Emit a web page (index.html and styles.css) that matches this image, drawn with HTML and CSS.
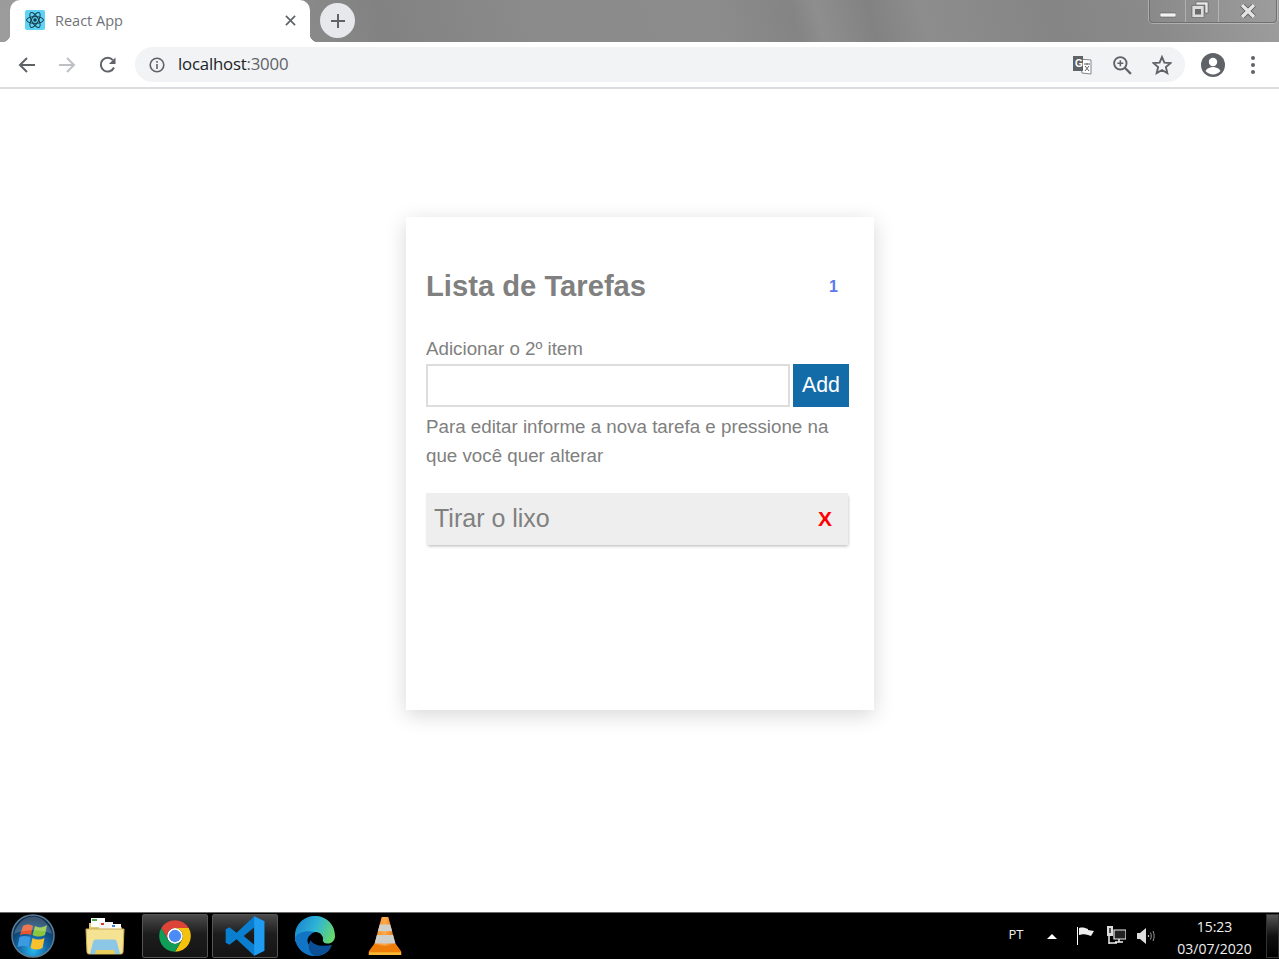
FILE: index.html
```html
<!DOCTYPE html>
<html>
<head>
<meta charset="utf-8">
<title>React App</title>
<link rel="stylesheet" href="styles.css">
</head>
<body>

<!-- browser tabs -->
<div class="tabstrip">
  <div class="tab">
    <svg class="favicon" viewBox="0 0 20 20">
      <rect width="20" height="20" rx="2" fill="#5ed3f3"/>
      <g fill="none" stroke="#143a4a" stroke-width="1">
        <ellipse cx="10" cy="10" rx="8.5" ry="3.4"/>
        <ellipse cx="10" cy="10" rx="8.5" ry="3.4" transform="rotate(60 10 10)"/>
        <ellipse cx="10" cy="10" rx="8.5" ry="3.4" transform="rotate(120 10 10)"/>
      </g>
      <circle cx="10" cy="10" r="1.8" fill="#143a4a"/>
    </svg>
    <span class="tab-title">React App</span>
    <svg class="tab-close" viewBox="0 0 12 12"><path d="M1 1l10 10M11 1L1 11" stroke="#5f6368" stroke-width="1.8"/></svg>
  </div>
  <div class="newtab">
    <svg viewBox="0 0 16 16"><path d="M8 1v14M1 8h14" stroke="#5f6368" stroke-width="2"/></svg>
  </div>
  <div class="winbtns">
    <div class="winbtn win-min"><svg viewBox="0 0 16 6"><rect y="1" width="16" height="4" rx="1" fill="#f2f2f2" stroke="#555" stroke-width=".6"/></svg></div>
    <div class="winbtn win-max"><svg viewBox="0 0 18 17"><path d="M5 1h12v11h-3V4H5z" fill="#e8e8e8" stroke="#444" stroke-width=".5"/><path d="M1 4.500h12v12H1z" fill="#dcdcdc" stroke="#444" stroke-width=".5"/><rect x="4" y="8" width="6" height="5.500" fill="#6a6a6a"/></svg></div>
    <div class="winbtn win-close"><svg viewBox="0 0 16 14"><path d="M2 1l12 12M14 1L2 13" stroke="#555" stroke-width="5"/><path d="M2 1l12 12M14 1L2 13" stroke="#e4e4e4" stroke-width="3.500"/></svg></div>
  </div>
</div>

<!-- address bar -->
<div class="toolbar">
  <svg class="navicon" viewBox="0 0 18 18"><path d="M17 9H2.500M9 2L2 9l7 7" fill="none" stroke="#5f6368" stroke-width="2"/></svg>
  <svg class="navicon" viewBox="0 0 18 18"><path d="M1 9h14.500M9 2l7 7-7 7" fill="none" stroke="#bdc1c6" stroke-width="2"/></svg>
  <svg class="navicon" viewBox="0 0 18 18"><path d="M15 11.500A6.900 6.900 0 1 1 13.900 4.100" fill="none" stroke="#5f6368" stroke-width="2"/><path d="M16.500 1.500v6.600h-6.600z" fill="#5f6368"/></svg>
  <div class="omnibox">
    <svg class="info" viewBox="0 0 16 16"><circle cx="8" cy="8" r="6.800" fill="none" stroke="#5f6368" stroke-width="1.600"/><path d="M7.200 7h1.600v5H7.200zM7.200 4h1.600v1.700H7.200z" fill="#5f6368"/></svg>
    <span class="url">localhost<span class="url-port">:3000</span></span>
    <div class="omni-icons">
      <svg class="omni-icon" viewBox="0 0 20 20"><path d="M8 4l11 1v14l-9-1z" fill="#fff" stroke="#80868b"/><path d="M1 1h10v15H1z" fill="#5f6368"/><text x="3" y="12" class="gt">G</text><path d="M12 9h6M15 8v2M13 16l4-5M13 11l4 5" stroke="#5f6368" stroke-width="1"/></svg>
      <svg class="omni-icon" viewBox="0 0 18 18"><circle cx="7.500" cy="7.500" r="5.600" fill="none" stroke="#5f6368" stroke-width="1.700"/><path d="M11.500 11.500l5.500 5.500" stroke="#5f6368" stroke-width="2"/><path d="M7.500 4.800v5.400M4.800 7.500h5.400" stroke="#5f6368" stroke-width="1.400"/></svg>
      <svg class="omni-icon" viewBox="0 0 20 20"><path d="M10 2l2.400 5.600 6.100.5-4.600 4 1.400 6L10 15l-5.300 3.100 1.400-6-4.600-4 6.100-.5z" fill="none" stroke="#5f6368" stroke-width="1.900"/></svg>
    </div>
  </div>
  <svg class="avatar" viewBox="0 0 24 24"><circle cx="12" cy="12" r="12" fill="#5f6368"/><circle cx="12" cy="9" r="4.200" fill="#fff"/><path d="M4.500 18c1.500-3 5-4 7.500-4s6 1 7.500 4c-4 4.500-11 4.500-15 0z" fill="#fff"/></svg>
  <div class="menu-dots"><i></i><i></i><i></i></div>
</div>

<!-- page -->
<div class="page">
  <div class="card">
    <div class="card-head">
      <h1>Lista de Tarefas</h1>
      <span class="count">1</span>
    </div>
    <label class="add-label" for="novo">Adicionar o 2º item</label>
    <div class="add-row">
      <input id="novo" class="add-input" type="text">
      <button class="add-btn">Add</button>
    </div>
    <p class="hint">Para editar informe a nova tarefa e pressione na que você quer alterar</p>
    <div class="item">
      <span>Tirar o lixo</span>
      <span class="item-del">X</span>
    </div>
  </div>
</div>

<!-- windows taskbar -->
<div class="taskbar">
  <div class="start">
    <svg viewBox="0 0 44 44" width="44" height="44">
      <defs>
        <radialGradient id="orb" cx="50%" cy="85%" r="75%"><stop offset="0" stop-color="#29b6ee"/><stop offset=".45" stop-color="#1468a8"/><stop offset="1" stop-color="#0a2c50"/></radialGradient>
      </defs>
      <circle cx="22" cy="22" r="21" fill="url(#orb)" stroke="#5d7c92" stroke-width="1.500"/>
      <path d="M12 12c3-2 7-2 10 0l-2 9c-3-1.500-7-1.500-11 0z" fill="#e8562a"/>
      <path d="M24 12c3 2 8 2 12-1l-2 10c-4 2-8 2-12.500 0z" fill="#8cc63e"/>
      <path d="M8.500 23c3-1.500 7-1.500 11 0l-2 10c-3-1.500-7-1.500-11 0z" fill="#3b9ae0"/>
      <path d="M21.500 24c4 2 8 2 12 0l-2 10c-4 2-8 2-12 0z" fill="#f8c12d"/>
      <path d="M3 20C6 8 15 2.500 22 2.500S38 8 41 20c-10-5-28-5-38 0z" fill="#fff" opacity=".2"/>
    </svg>
  </div>
  <div class="task">
    <svg viewBox="0 0 40 40" width="40" height="40">
      <path d="M4 7h14l2 2h15l2 3v8H4z" fill="#e2c870"/>
      <rect x="6" y="2" width="14" height="9" fill="#fff"/><rect x="7" y="3" width="5" height="2" fill="#4aa84a"/>
      <rect x="14" y="6" width="14" height="8" fill="#f4f4f4"/><rect x="16" y="7" width="3" height="2" fill="#d2402c"/>
      <rect x="25" y="8" width="11" height="7" fill="#fff"/><rect x="27" y="9" width="3" height="2" fill="#3c82d0"/>
      <path d="M1 13h38l-1 23a2 2 0 0 1-2 2H4a2 2 0 0 1-2-2z" fill="#f6e293" stroke="#c9ad58"/>
      <path d="M5 38l3-12c.5-2 2-2.500 4-2.500h16c2 0 3.500.5 4 2.500l3 12z" fill="#8cc8e6"/>
      <path d="M10 38l1-4h18l1 4z" fill="#e8cc5c"/>
    </svg>
  </div>
  <div class="task task-open">
    <svg viewBox="0 0 48 48" width="38" height="38">
      <circle cx="24" cy="24" r="10" fill="#fff"/>
      <path d="M6.680 14A20 20 0 0 1 41.320 14H24A10 10 0 0 0 15.340 29z" fill="#db4437"/>
      <path d="M41.320 14A20 20 0 0 1 24 44L32.660 29A10 10 0 0 0 24 14z" fill="#f4c20d"/>
      <path d="M24 44A20 20 0 0 1 6.680 14L15.340 29A10 10 0 0 0 32.660 29z" fill="#0f9d58"/>
      <circle cx="24" cy="24" r="7.800" fill="#4b8bf5"/>
    </svg>
  </div>
  <div class="task task-open">
    <svg viewBox="0 0 100 100" width="42" height="42">
      <path d="M72 3L96 15V85L72 97L30 58L13 71L4 66V34L13 29L30 42zM72 29L47 50L72 71z" fill="#0a7fd0"/>
      <path d="M72 3L96 15V85L72 97z" fill="#1f9cf0"/>
    </svg>
  </div>
  <div class="task">
    <svg viewBox="0 0 40 40" width="40" height="40">
      <defs>
        <linearGradient id="edge" x1="0" y1=".3" x2="1" y2=".6"><stop offset="0" stop-color="#1a86d0"/><stop offset=".5" stop-color="#2fb4d6"/><stop offset="1" stop-color="#66d96a"/></linearGradient>
      </defs>
      <path d="M0 20C0 8 9 0 20 0C31 0 40 8 40 20C40 25 36 28 32 27.500C27 27 28 24 28 22C27 18 24 16 20 16C10 16 4 21 0 26z" fill="url(#edge)"/>
      <path d="M0 20C0 32 9 40 20 40C27 40 33 37 36 31C30 35 22 36 16 31C10 26 12 19 20 16C12 14 2 16 0 22z" fill="#1274c4"/>
      <path d="M15.500 24C18 29 26 31 37 29C34 36 27 40 20 40C14 38 12 30 15.500 24z" fill="#0b4f96"/>
    </svg>
  </div>
  <div class="task">
    <svg viewBox="0 0 34 40" width="34" height="38">
      <defs>
        <linearGradient id="cone" x1="0" x2="1" y1="0" y2="0"><stop offset="0" stop-color="#f28a1a"/><stop offset=".5" stop-color="#ffa94a"/><stop offset="1" stop-color="#e06a08"/></linearGradient>
      </defs>
      <path d="M13.500 0h7L29 32H5z" fill="url(#cone)"/>
      <path d="M11.500 8h11l2 7h-15zM8.500 19h17l2.500 9H6z" fill="#cfcfcb"/>
      <path d="M6 28c6 3 16 3 22 0l6 8v4H0v-4z" fill="#ef7d0a"/>
      <path d="M0 37h34v3H0z" fill="#f7b733"/>
    </svg>
  </div>
  <div class="tray">
    <span class="tray-lang">PT</span>
    <svg class="tray-up" viewBox="0 0 10 6"><path d="M0 6l5-5 5 5z" fill="#fff"/></svg>
    <svg class="tray-icon" viewBox="0 0 20 22"><path d="M1.500 2v18" stroke="#fff"/><path d="M3 3c4-1 6 0 9 1v1l6 1-3 5-3-1c-3-1-5-1-9 0z" fill="#eee"/></svg>
    <svg class="tray-icon" viewBox="0 0 20 22"><rect x="1" y="1" width="6" height="10" fill="#ddd"/><rect x="3" y="3" width="2" height="5" fill="#555"/><path d="M3 11v8" stroke="#eee" stroke-width="1.500"/><path d="M8 5h12v9H8z" fill="#222" stroke="#eee" stroke-width="1.200"/><path d="M9 17h8M13 14v3M3 18h8" stroke="#eee" stroke-width="1.500"/></svg>
    <svg class="tray-icon" viewBox="0 0 20 22"><path d="M1 8h3l6-5v16l-6-5H1z" fill="#ddd"/><path d="M12.500 10v2" stroke="#bbb" stroke-width="1.200"/><path d="M14.500 7.500c1 2 1 5 0 7M17 6c1.500 3 1.500 7 0 10" fill="none" stroke="#999" stroke-width="1"/></svg>
    <div class="clock"><span>15:23</span><span>03/07/2020</span></div>
    <div class="show-desktop"></div>
  </div>
</div>

</body>
</html>
```

FILE: styles.css
```css
html, body {
   margin: 0;
   height: 100%;
}

body {
   width: 1279px;
   height: 959px;
   overflow: hidden;
   display: flex;
   flex-direction: column;
   background-color: white;
   font-family: "Liberation Sans", Arial, sans-serif;
}

/* tabs */
.tabstrip {
   height: 42px;
   flex: none;
   display: flex;
   align-items: flex-start;
   padding-left: 10px;
   box-sizing: border-box;
   background: linear-gradient(75deg, #9c9c9c 0, #8f8f8f 20%, #828282 30%, #8b8b8b 42%, #8c8c8c 56%, #848484 62%, #8e8e8e 64%, #828282 68%, #8d8d8d 72%, #858585 82%, #8a8a8a 90%, #9d9d9d 100%);
}

.tab {
   width: 300px;
   height: 42px;
   flex: none;
   box-sizing: border-box;
   position: relative;
   display: flex;
   align-items: center;
   padding: 0 14px 2px 15px;
   background: white;
   border-radius: 10px 10px 0 0;
}

.tab::before, .tab::after {
   content: "";
   position: absolute;
   bottom: 0;
   width: 8px;
   height: 8px;
}

.tab::before {
   left: -8px;
   background: radial-gradient(circle at 0 0, transparent 8px, white 8.500px);
}

.tab::after {
   right: -8px;
   background: radial-gradient(circle at 100% 0, transparent 8px, white 8.500px);
}

.favicon {
   width: 20px;
   height: 20px;
   flex: none;
}

.tab-title {
   margin-left: 10px;
   flex: 1;
   font-family: "Open Sans", sans-serif;
   font-size: 14.5px;
   color: #6f7377;
}

.tab-close {
   width: 11px;
   height: 11px;
}

.newtab {
   width: 35px;
   height: 35px;
   margin: 3px 0 0 10px;
   flex: none;
   border-radius: 50%;
   background: #e6e8eb;
   display: flex;
   align-items: center;
   justify-content: center;
}

.newtab svg {
   width: 16px;
   height: 16px;
}

.winbtns {
   margin-left: auto;
   margin-right: 2px;
   width: 128px;
   height: 23px;
   box-sizing: border-box;
   display: flex;
   border: 1px solid #6f6f6f;
   border-top: 0;
   border-radius: 0 0 4px 4px;
   box-shadow: 0 0 0 1px rgba(255, 255, 255, .3);
}

.winbtn {
   display: flex;
   align-items: flex-end;
   justify-content: center;
   border-right: 1px solid rgba(255, 255, 255, .3);
   box-sizing: border-box;
}

.winbtn svg {
   display: block;
}

.win-min {
   width: 36px;
   padding-bottom: 4px;
}

.win-min svg {
   width: 16px;
   height: 6px;
}

.win-max {
   width: 33px;
   padding: 0 4px 4px 0;
}

.win-max svg {
   width: 18px;
   height: 17px;
}

.win-close {
   flex: 1;
   border-right: 0;
   padding-bottom: 4px;
}

.win-close svg {
   width: 16px;
   height: 14px;
}

/* address bar */
.toolbar {
   height: 47px;
   flex: none;
   box-sizing: border-box;
   display: flex;
   align-items: center;
   padding-left: 18px;
   background: white;
   border-bottom: 2px solid #dadce0;
}

.navicon {
   width: 18px;
   height: 18px;
   margin-right: 22px;
   flex: none;
}

.navicon:nth-child(2) {
   margin-right: 23px;
}

.navicon:nth-child(3) {
   margin-right: 18px;
}

.omnibox {
   width: 1050px;
   height: 35px;
   flex: none;
   box-sizing: border-box;
   display: flex;
   align-items: center;
   padding: 0 13px 0 14px;
   background: #f1f3f4;
   border-radius: 18px;
}

.info {
   width: 16px;
   height: 16px;
}

.url {
   margin-left: 13px;
   padding-bottom: 2px;
   font-family: "Open Sans", sans-serif;
   font-size: 16.8px;
   letter-spacing: -0.2px;
   color: #202124;
}

.url-port {
   color: #5f6368;
}

.omni-icons {
   margin-left: auto;
   display: flex;
   gap: 20px;
}

.omni-icon {
   width: 20px;
   height: 20px;
}

.gt {
   font-family: "Liberation Sans", sans-serif;
   font-weight: bold;
   font-size: 10px;
   fill: white;
}

.avatar {
   width: 24px;
   height: 24px;
   margin-left: 16px;
   flex: none;
}

.menu-dots {
   margin-left: 26px;
   display: flex;
   flex-direction: column;
   gap: 3px;
}

.menu-dots i {
   width: 4px;
   height: 4px;
   border-radius: 50%;
   background: #5f6368;
}

/* the todo page */
.page {
   flex: 1;
   display: flex;
   justify-content: center;
   align-items: flex-start;
   padding: 128px 0 0 1px;
   box-sizing: border-box;
}

.card {
   width: 468px;
   height: 493px;
   box-sizing: border-box;
   padding: 50px 25px 0 20px;
   background: white;
   box-shadow: 0 5px 20px rgba(0, 0, 0, .16);
   color: #808080;
}

.card-head {
   display: flex;
   align-items: center;
   justify-content: space-between;
   padding-right: 11px;
   height: 38px;
}

h1 {
   margin: 0;
   font-size: 29.2px;
   font-weight: bold;
}

.count {
   font-size: 16px;
   font-weight: bold;
   color: #5a78f5;
   margin-top: 1px;
}

.add-label {
   display: block;
   margin-top: 33px;
   font-size: 18.75px;
   line-height: 21px;
}

.add-row {
   display: flex;
   gap: 3px;
   margin-top: 5px;
}

.add-input {
   width: 364px;
   height: 43px;
   margin: 0;
   box-sizing: border-box;
   border: 2px solid #ddd;
   background: white;
   outline: none;
}

.add-btn {
   width: 56px;
   height: 43px;
   padding: 0;
   border: 0;
   background: #136ca8;
   color: white;
   font-family: "Liberation Sans", sans-serif;
   font-size: 21.3px;
}

.hint {
   margin: 5px 0 0;
   font-size: 18.75px;
   line-height: 29px;
}

.item {
   width: 422px;
   height: 52px;
   margin-top: 23px;
   box-sizing: border-box;
   display: flex;
   align-items: center;
   justify-content: space-between;
   padding: 0 16px 1px 8px;
   background: #eee;
   box-shadow: 1px 2px 3px -1px rgba(0, 0, 0, .3);
   font-size: 25px;
}

.item-del {
   font-size: 21px;
   font-weight: bold;
   color: red;
}

/* windows taskbar */
.taskbar {
   height: 47px;
   flex: none;
   box-sizing: border-box;
   display: flex;
   gap: 4px;
   align-items: stretch;
   padding: 1px 0;
   background: #000;
   border-top: 1px solid #6a6a6a;
}

.start {
   width: 68px;
   flex: none;
   display: flex;
   align-items: center;
   padding-left: 11px;
   box-sizing: border-box;
}

.task {
   width: 66px;
   flex: none;
   box-sizing: border-box;
   display: flex;
   align-items: center;
   justify-content: center;
}

.task-open {
   border: 1px solid #555;
   border-radius: 2px;
   background: linear-gradient(#4a4a4a, #1d1d1d 45%, #141414);
}

.tray {
   flex: 1;
   display: flex;
   align-items: center;
   color: #f0f0f0;
}

.tray-lang {
   margin-left: auto;
   width: 32px;
   text-align: center;
   font-family: "Open Sans", sans-serif;
   font-size: 13px;
   margin-top: -5px;
}

.tray-up {
   width: 10px;
   height: 6px;
   margin: 0 19px 0 15px;
}

.tray-icon {
   width: 20px;
   height: 22px;
   margin-right: 10px;
}

.clock {
   width: 97px;
   padding-top: 2px;
   display: flex;
   flex-direction: column;
   align-items: center;
   gap: 5px;
   font-family: "Open Sans", sans-serif;
   font-size: 14px;
   line-height: 17px;
}

.show-desktop {
   width: 13px;
   height: 100%;
   margin-left: 3px;
   border: 1px solid #333;
   box-sizing: border-box;
   background: linear-gradient(#555, #111 50%, #000);
}
```
